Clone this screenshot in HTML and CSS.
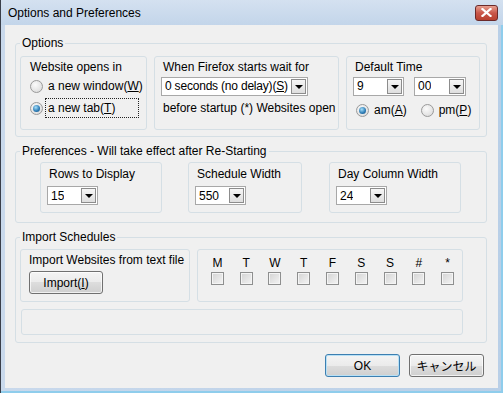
FILE: index.html
```html
<!DOCTYPE html>
<html lang="en">
<head>
  <meta charset="UTF-8">
  <title>Options and Preferences</title>
  <link rel="stylesheet" href="styles.css">
</head>
<body>

<div class="window">
  <div class="titlebar">
    <span class="title">Options and Preferences</span>
    <span class="close-btn">
      <svg width="11" height="9" viewBox="0 0 11 9"><path d="M1.5 1 L9.5 8 M9.5 1 L1.5 8" stroke="#fff" stroke-width="2.2" stroke-linecap="square"/></svg>
    </span>
  </div>

  <div class="client">

    <fieldset class="group">
      <legend>Options</legend>
      <div class="row">
        <div class="box box-opens">
          <div class="box-label">Website opens in</div>
          <div class="line">
            <span class="radio"></span>
            <span class="opt">a new window(<u>W</u>)</span>
          </div>
          <div class="line">
            <span class="radio checked"></span>
            <span class="opt focused">a new tab(<u>T</u>)</span>
          </div>
        </div>
        <div class="box box-wait">
          <div class="box-label">When Firefox starts wait for</div>
          <div class="line">
            <div class="combo combo-wait"><span class="val">0 seconds (no delay)(<u>S</u>)</span><span class="arrow"></span></div>
          </div>
          <div class="line box-label">before startup (*) Websites open</div>
        </div>
        <div class="box box-time">
          <div class="box-label">Default Time</div>
          <div class="line gap10">
            <div class="combo combo-hour"><span class="val">9</span><span class="arrow"></span></div>
            <div class="combo combo-min"><span class="val">00</span><span class="arrow"></span></div>
          </div>
          <div class="line ampm">
            <span class="radio checked"></span>
            <span class="opt">am(<u>A</u>)</span>
            <span class="radio pm"></span>
            <span class="opt">pm(<u>P</u>)</span>
          </div>
        </div>
      </div>
    </fieldset>

    <fieldset class="group group-prefs">
      <legend>Preferences - Will take effect after Re-Starting</legend>
      <div class="row prefs-row">
        <div class="box box-small w-rows">
          <div class="box-label">Rows to Display</div>
          <div class="combo combo-num"><span class="val">15</span><span class="arrow"></span></div>
        </div>
        <div class="box box-small w-sched">
          <div class="box-label">Schedule Width</div>
          <div class="combo combo-num"><span class="val">550</span><span class="arrow"></span></div>
        </div>
        <div class="box box-small w-day">
          <div class="box-label">Day Column Width</div>
          <div class="combo combo-num"><span class="val">24</span><span class="arrow"></span></div>
        </div>
      </div>
    </fieldset>

    <fieldset class="group group-import">
      <legend>Import Schedules</legend>
      <div class="row">
        <div class="box box-import">
          <div class="box-label">Import Websites from text file</div>
          <button class="btn btn-import">Import(<u>I</u>)</button>
        </div>
        <div class="box box-days">
          <div class="day"><span>M</span><span class="check"></span></div>
          <div class="day"><span>T</span><span class="check"></span></div>
          <div class="day"><span>W</span><span class="check"></span></div>
          <div class="day"><span>T</span><span class="check"></span></div>
          <div class="day"><span>F</span><span class="check"></span></div>
          <div class="day"><span>S</span><span class="check"></span></div>
          <div class="day"><span>S</span><span class="check"></span></div>
          <div class="day"><span>#</span><span class="check"></span></div>
          <div class="day"><span>*</span><span class="check"></span></div>
        </div>
      </div>
      <div class="box box-status"></div>
    </fieldset>

    <div class="buttons">
      <button class="btn btn-default">OK</button>
      <button class="btn">キャンセル</button>
    </div>

  </div>
</div>

</body>
</html>
```

FILE: styles.css
```css
body {
  margin: 0;
  font-family: "Liberation Sans", "Noto Sans CJK JP", sans-serif;
  font-size: 12px;
  color: #000;
}

.window {
  width: 503px;
  height: 393px;
  box-sizing: border-box;
  display: flex;
  flex-direction: column;
  background: linear-gradient(to right, #c9d9ec, #b9cfe7);
  border-left: 1px solid #3a3f4a;
  box-shadow: inset -2px -2px 0 #8fcdec;
}

.titlebar {
  height: 25px;
  display: flex;
  align-items: center;
  padding: 0 5px 0 7px;
  background: linear-gradient(to bottom, #d4e1f0, #c3d5ea);
}

.title {
  line-height: 16px;
}

.close-btn {
  margin-left: auto;
  width: 21px;
  height: 14px;
  border: 1px solid #6b2a2a;
  border-radius: 3px;
  background: linear-gradient(to bottom, #e8a090, #c9574a 50%, #b8402f);
  display: flex;
  align-items: center;
  justify-content: center;
}

.client {
  flex: 1;
  margin: 0 5px 5px 4px;
  background: #f0f0f0;
  display: flex;
  flex-direction: column;
}

/* group boxes */
.group {
  width: 472px;
  box-sizing: border-box;
  margin: 7px 0 0 10px;
  padding: 4px 4px 7px 4px;
  border: 1px solid #d5dfe5;
  border-radius: 3px;
  min-width: 0;
}

.group:first-child {
  margin-top: 11px;
  padding-top: 5px;
  padding-bottom: 6px;
}

.group-prefs {
  padding-top: 3px;
  padding-bottom: 9px;
}

legend {
  padding: 0 2px;
  line-height: 15px;
}

.row {
  display: flex;
  gap: 7px;
}

.box {
  box-sizing: border-box;
  border: 1px solid #d5dfe5;
  border-radius: 3px;
}

.box-label {
  line-height: 16px;
  white-space: nowrap;
}

.box-opens {
  width: 127px;
  height: 74px;
  padding: 2px 0 0 9px;
}

.box-wait {
  width: 185px;
  height: 74px;
  padding: 2px 0 0 6px;
}

.box-wait .box-label {
  padding-left: 2px;
}

.box-time {
  width: 134px;
  height: 74px;
  padding: 2px 0 0 6px;
}

.box-time > .box-label {
  padding-left: 2px;
}

.line {
  height: 22px;
  display: flex;
  align-items: center;
}

.box-opens .line:first-of-type,
.box-wait .line:first-of-type,
.box-time .line:first-of-type {
  margin-top: 2px;
}

.gap10 {
  gap: 10px;
}

.ampm {
  padding-left: 3px;
  margin-top: 2px;
}

/* radios */
.radio {
  width: 13px;
  height: 13px;
  box-sizing: border-box;
  border-radius: 50%;
  border: 1px solid #9a9a9a;
  background: radial-gradient(circle at 40% 35%, #fbfbfb, #d6d6d6);
  flex: none;
  display: flex;
  align-items: center;
  justify-content: center;
}

.radio.checked::after {
  content: "";
  width: 7px;
  height: 7px;
  border-radius: 50%;
  background: radial-gradient(circle at 40% 35%, #a6e0fb, #2a79b3 60%, #1b4f7a);
}

.radio.pm {
  margin-left: 12px;
}

.opt {
  margin-left: 3px;
  padding: 1px 2px;
  line-height: 16px;
  white-space: nowrap;
}

.focused {
  width: 92px;
  box-sizing: border-box;
  outline: 1px dotted #222;
}

/* comboboxes */
.combo {
  height: 19px;
  box-sizing: border-box;
  border: 1px solid #a8a8a8;
  background: #fff;
  display: flex;
  align-items: center;
  justify-content: space-between;
  padding: 0 1px 0 3px;
}

.val {
  white-space: nowrap;
  overflow: hidden;
}

.combo-wait { width: 147px; }
.combo-wait .val { letter-spacing: -0.2px; }
.combo-hour { width: 51px; }
.combo-min { width: 52px; }
.combo-num { width: 51px; margin-top: 4px; }

.arrow {
  width: 15px;
  height: 15px;
  box-sizing: border-box;
  border: 1px solid #8c8c8c;
  background: linear-gradient(to bottom, #f6f6f6, #dedede);
  display: flex;
  align-items: center;
  justify-content: center;
  flex: none;
}

.arrow::after {
  content: "";
  border-left: 4px solid transparent;
  border-right: 4px solid transparent;
  border-top: 4px solid #000;
  margin-top: 1px;
}

/* preferences */
.prefs-row {
  padding-left: 20px;
  gap: 26px;
}

.box-small {
  height: 51px;
  padding: 3px 0 0 6px;
}

.box-small .box-label {
  padding-left: 2px;
}

.w-rows { width: 122px; }
.w-sched { width: 114px; margin-right: 1px; }
.w-day { width: 132px; }

/* import */
.box-import {
  width: 170px;
  height: 53px;
  padding: 2px 0 0 8px;
}

.btn {
  font-family: "Liberation Sans", "Noto Sans CJK JP", sans-serif;
  font-size: 12px;
  color: #000;
  height: 23px;
  width: 75px;
  padding: 0;
  border: 1px solid #707070;
  border-radius: 3px;
  background: linear-gradient(to bottom, #f4f4f4, #ebebeb 50%, #dddddd 50%, #cfcfcf);
  box-shadow: inset 0 0 0 1px rgba(255, 255, 255, 0.7);
}

.btn-import {
  width: 74px;
  margin-top: 3px;
  display: block;
}

.box-days {
  width: 266px;
  height: 53px;
  padding: 5px 0 0 5px;
  display: flex;
}

.day {
  width: 29px;
  display: flex;
  flex-direction: column;
  align-items: center;
  line-height: 16px;
}

.check {
  width: 13px;
  height: 13px;
  box-sizing: border-box;
  border: 1px solid #8e8f8f;
  background: linear-gradient(135deg, #d3d3d3, #f4f4f4);
  box-shadow: inset 0 0 0 1px #f4f4f4;
  margin-top: 1px;
}

.box-status {
  width: 442px;
  height: 26px;
  margin: 7px 0 0 1px;
}

/* dialog buttons */
.buttons {
  display: flex;
  justify-content: flex-end;
  gap: 9px;
  margin-top: 11px;
  padding-right: 14px;
}

.btn-default {
  border-color: #3c7fb1;
  box-shadow: inset 0 0 0 1px #b8e0f5;
}
```
